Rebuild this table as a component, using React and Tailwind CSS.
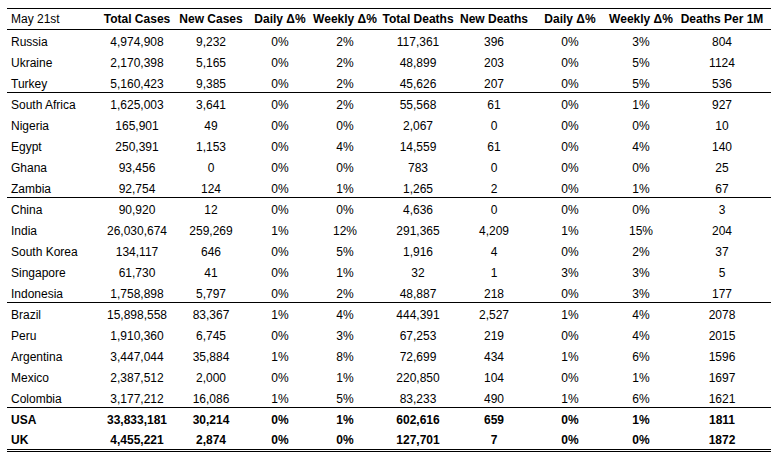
const rows = [
  ["Russia", "4,974,908", "9,232", "0%", "2%", "117,361", "396", "0%", "3%", "804"],
  ["Ukraine", "2,170,398", "5,165", "0%", "2%", "48,899", "203", "0%", "5%", "1124"],
  ["Turkey", "5,160,423", "9,385", "0%", "2%", "45,626", "207", "0%", "5%", "536", "sep"],
  ["South Africa", "1,625,003", "3,641", "0%", "2%", "55,568", "61", "0%", "1%", "927"],
  ["Nigeria", "165,901", "49", "0%", "0%", "2,067", "0", "0%", "0%", "10"],
  ["Egypt", "250,391", "1,153", "0%", "4%", "14,559", "61", "0%", "4%", "140"],
  ["Ghana", "93,456", "0", "0%", "0%", "783", "0", "0%", "0%", "25"],
  ["Zambia", "92,754", "124", "0%", "1%", "1,265", "2", "0%", "1%", "67", "sep"],
  ["China", "90,920", "12", "0%", "0%", "4,636", "0", "0%", "0%", "3"],
  ["India", "26,030,674", "259,269", "1%", "12%", "291,365", "4,209", "1%", "15%", "204"],
  ["South Korea", "134,117", "646", "0%", "5%", "1,916", "4", "0%", "2%", "37"],
  ["Singapore", "61,730", "41", "0%", "1%", "32", "1", "3%", "3%", "5"],
  ["Indonesia", "1,758,898", "5,797", "0%", "2%", "48,887", "218", "0%", "3%", "177", "sep"],
  ["Brazil", "15,898,558", "83,367", "1%", "4%", "444,391", "2,527", "1%", "4%", "2078"],
  ["Peru", "1,910,360", "6,745", "0%", "3%", "67,253", "219", "0%", "4%", "2015"],
  ["Argentina", "3,447,044", "35,884", "1%", "8%", "72,699", "434", "1%", "6%", "1596"],
  ["Mexico", "2,387,512", "2,000", "0%", "1%", "220,850", "104", "0%", "1%", "1697"],
  ["Colombia", "3,177,212", "16,086", "1%", "5%", "83,233", "490", "1%", "6%", "1621", "sep"],
  ["USA", "33,833,181", "30,214", "0%", "1%", "602,616", "659", "0%", "1%", "1811", "bold"],
  ["UK", "4,455,221", "2,874", "0%", "0%", "127,701", "7", "0%", "0%", "1872", "boldlast"],
];

const headers = ["Total Cases", "New Cases", "Daily Δ%", "Weekly Δ%", "Total Deaths", "New Deaths", "Daily Δ%", "Weekly Δ%", "Deaths Per 1M"];

const grid = "grid grid-cols-[94px_72px_76px_62px_68px_78px_74px_78px_64px_98px] items-center";

export default function App() {
  return (
    <div className="w-[776px] h-[457px] bg-white pt-[8px] pl-[7px] text-black text-[12px] leading-none" style={{ fontFamily: '"Liberation Sans", Arial, sans-serif' }}>
      <div className="w-[764px]">
        <div className={`${grid} h-[22px] border-t border-b border-black`}>
          <div className="pl-[4px] whitespace-nowrap">May 21st</div>
          {headers.map((h, i) => (
            <div key={i} className="text-center font-bold whitespace-nowrap">{h}</div>
          ))}
        </div>
        {rows.map((r, idx) => {
          const flag = r[10];
          const bold = flag === "bold" || flag === "boldlast";
          let cls = "h-[21px] pt-[3px]";
          if (flag === "sep") cls = "h-[21px] pt-[3px] border-b border-black";
          if (flag === "boldlast") cls = "h-[23px] pt-[1px] border-b-[3px] border-double border-black";
          return (
            <div key={idx} className={`${grid} ${cls} ${bold ? "font-bold" : ""}`}>
              <div className="pl-[4px] whitespace-nowrap">{r[0]}</div>
              {r.slice(1, 10).map((c, j) => (
                <div key={j} className="text-center whitespace-nowrap">{c}</div>
              ))}
            </div>
          );
        })}
      </div>
    </div>
  );
}
